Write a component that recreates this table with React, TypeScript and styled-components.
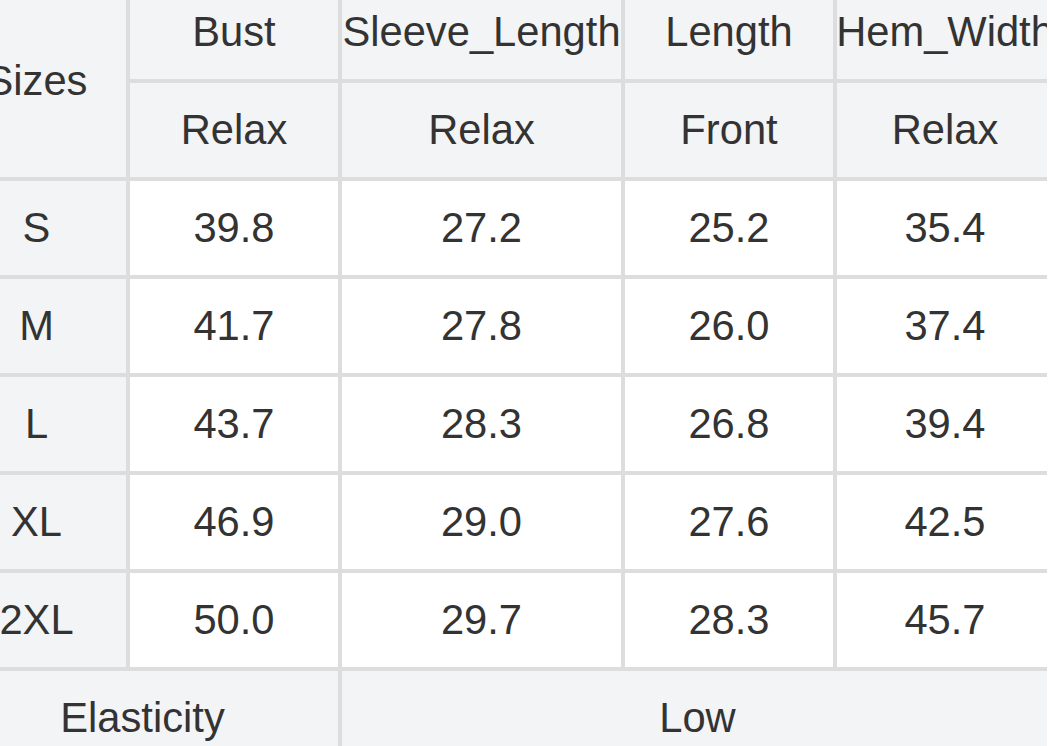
import React from "react";
import styled, { createGlobalStyle } from "styled-components";

const GlobalStyle = createGlobalStyle`
  html, body {
    margin: 0;
    padding: 0;
    background: #ffffff;
  }
  body {
    font-family: "Liberation Sans", Arial, Helvetica, sans-serif;
    color: #333333;
  }
`;

const Viewport = styled.div`
  width: 1047px;
  height: 746px;
  overflow: hidden;
`;

const Grid = styled.div`
  display: grid;
  grid-template-columns: 179px 208px 279px 208px 216px;
  grid-auto-rows: 94px;
  gap: 4px;
  background: #dddddd;
  width: max-content;
  margin-left: -53px;
  margin-top: -15px;
`;

const Cell = styled.div<{ $tone?: "head" | "body"; $span?: number; $rows?: number }>`
  display: flex;
  align-items: center;
  justify-content: center;
  white-space: nowrap;
  font-size: 41.7px;
  line-height: 1;
  color: #333333;
  background: ${(p) => (p.$tone === "body" ? "#ffffff" : "#f3f4f6")};
  grid-column: ${(p) => (p.$span ? `span ${p.$span}` : "auto")};
  grid-row: ${(p) => (p.$rows ? `span ${p.$rows}` : "auto")};
  overflow: visible;
`;

const headers = ["Bust", "Sleeve_Length", "Length", "Hem_Width"];
const subs = ["Relax", "Relax", "Front", "Relax"];
const rows: [string, string[]][] = [
  ["S", ["39.8", "27.2", "25.2", "35.4"]],
  ["M", ["41.7", "27.8", "26.0", "37.4"]],
  ["L", ["43.7", "28.3", "26.8", "39.4"]],
  ["XL", ["46.9", "29.0", "27.6", "42.5"]],
  ["2XL", ["50.0", "29.7", "28.3", "45.7"]],
];

export default function App() {
  return (
    <>
      <GlobalStyle />
      <Viewport>
        <Grid>
          <Cell $rows={2}>Sizes</Cell>
          {headers.map((h) => (
            <Cell key={h}>{h}</Cell>
          ))}
          {subs.map((s, i) => (
            <Cell key={`sub-${i}`}>{s}</Cell>
          ))}
          {rows.map(([size, vals]) => (
            <React.Fragment key={size}>
              <Cell>{size}</Cell>
              {vals.map((v, i) => (
                <Cell key={i} $tone="body">
                  {v}
                </Cell>
              ))}
            </React.Fragment>
          ))}
          <Cell $span={2}>Elasticity</Cell>
          <Cell $span={3}>Low</Cell>
        </Grid>
      </Viewport>
    </>
  );
}
